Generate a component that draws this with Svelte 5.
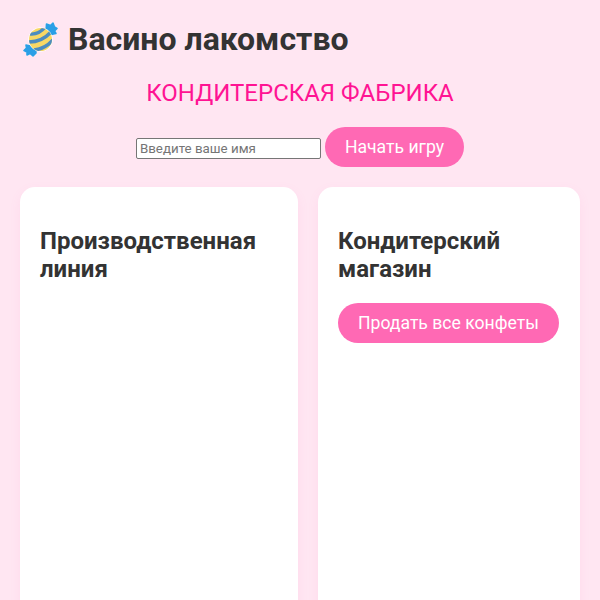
<script>
  let playerName = $state('');
</script>

<div class="game">
  <header class="top">
    <svg class="logo" width="40" height="40" viewBox="0 0 40 40" xmlns="http://www.w3.org/2000/svg">
      <defs>
        <clipPath id="ball"><circle cx="20.5" cy="19.5" r="11.5" /></clipPath>
      </defs>
      <!-- обёртка -->
      <g fill="#2b9fe6" stroke="#2b9fe6" stroke-width="1.6" stroke-linejoin="round">
        <path d="M26 11 L26.5 4 L30.5 5.5 L33 3 L34.5 7 L37 8.5 L34.5 11 L36 13.5 L29 15 Z" />
        <path d="M15 27 L6 25 L6.5 28 L4 30.5 L7 32 L7 35 L10 33.5 L13 36 L16 33 Z" />
      </g>
      <!-- конфета -->
      <circle cx="20.5" cy="19.5" r="12" fill="#fff" />
      <circle cx="20.5" cy="19.5" r="11.5" fill="#f8d865" />
      <g clip-path="url(#ball)" fill="none" stroke="#4c8cc0" stroke-width="3.4">
        <path d="M10 14 Q19 15 26 6" />
        <path d="M9 22 Q22 22 31 12" />
        <path d="M14 30 Q25 29 33 20" />
      </g>
    </svg>
    <h1>Васино лакомство</h1>
  </header>

  <h2 class="subtitle">КОНДИТЕРСКАЯ ФАБРИКА</h2>

  <div class="start">
    <input type="text" placeholder="Введите ваше имя" bind:value={playerName} />
    <button>Начать игру</button>
  </div>

  <div class="panels">
    <section class="panel">
      <h3>Производственная линия</h3>
    </section>
    <section class="panel">
      <h3>Кондитерский магазин</h3>
      <button>Продать все конфеты</button>
    </section>
  </div>
</div>

<style>
  :global(body) {
    background: #ffe6f2;
    font-family: Roboto, "Noto Sans", sans-serif;
    overflow: hidden;
  }

  .game {
    padding: 20px;
    height: 600px;
    box-sizing: border-box;
    overflow: hidden;
  }

  .top {
    display: flex;
    align-items: flex-start;
    gap: 8px;
    height: 40px;
  }

  .logo {
    flex: none;
    filter: drop-shadow(0 0 0.6px #fff);
  }

  h1 {
    margin: 0;
    font-size: 32px;
    line-height: 38px;
    font-weight: 700;
    color: #333;
  }

  .subtitle {
    margin: 19px 0 0;
    font-size: 24px;
    line-height: 28px;
    font-weight: 400;
    text-align: center;
    color: #ff1493;
  }

  .start {
    margin-top: 20px;
    height: 40px;
    text-align: center;
  }

  input {
    width: 185px;
    height: 21px;
    box-sizing: border-box;
    padding: 1px 3px;
    border: 1px solid #767676;
    border-radius: 2px;
    font-family: Roboto, sans-serif;
    font-size: 13.333px;
  }

  button {
    height: 40px;
    padding: 0 20px;
    border: none;
    border-radius: 25px;
    background: #ff69b4;
    color: #fff;
    font-family: Roboto, sans-serif;
    font-size: 17.6px;
    white-space: nowrap;
  }

  .panels {
    display: grid;
    grid-template-columns: 278fr 262fr;
    gap: 20px;
    margin-top: 20px;
  }

  .panel {
    min-height: 500px;
    padding: 40px 20px 20px;
    background: #fff;
    border-radius: 15px;
    box-shadow: 0 4px 12px rgba(255, 105, 180, 0.08);
  }

  h3 {
    margin: 0 0 20px;
    font-size: 24px;
    line-height: 28px;
    font-weight: 700;
    color: #333;
  }
</style>
